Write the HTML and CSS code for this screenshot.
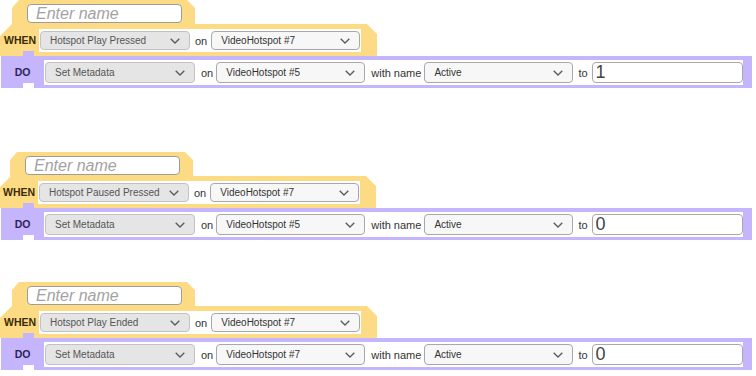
FILE: index.html
```html
<!DOCTYPE html>
<html>
<head>
<meta charset="utf-8">
<link rel="stylesheet" href="styles.css">
</head>
<body>
<div class="block b1">
  <div class="tab"><input class="name" placeholder="Enter name"></div>
  <div class="when">
    <span class="kw-when">WHEN</span>
    <div class="fields">
      <div class="sel sel-gray"><span>Hotspot Play Pressed</span><svg class="chev" width="10" height="6" viewBox="0 0 10 6"><polyline points="0.7,0.7 5,5 9.3,0.7"/></svg></div>
      <span class="lbl">on</span>
      <div class="sel"><span>VideoHotspot #7</span><svg class="chev" width="10" height="6" viewBox="0 0 10 6"><polyline points="0.7,0.7 5,5 9.3,0.7"/></svg></div>
    </div>
  </div>
  <div class="do">
    <span class="kw-do">DO</span>
    <div class="fields fields-do">
      <div class="sel sel-gray"><span>Set Metadata</span><svg class="chev" width="10" height="6" viewBox="0 0 10 6"><polyline points="0.7,0.7 5,5 9.3,0.7"/></svg></div>
      <span class="lbl">on</span>
      <div class="sel"><span>VideoHotspot #5</span><svg class="chev" width="10" height="6" viewBox="0 0 10 6"><polyline points="0.7,0.7 5,5 9.3,0.7"/></svg></div>
      <span class="lbl">with name</span>
      <div class="sel"><span>Active</span><svg class="chev" width="10" height="6" viewBox="0 0 10 6"><polyline points="0.7,0.7 5,5 9.3,0.7"/></svg></div>
      <span class="lbl lbl-to">to</span>
      <input class="val" value="1">
    </div>
  </div>
</div>

<div class="block b2">
  <div class="tab"><input class="name" placeholder="Enter name"></div>
  <div class="when">
    <span class="kw-when">WHEN</span>
    <div class="fields">
      <div class="sel sel-gray"><span>Hotspot Paused Pressed</span><svg class="chev" width="10" height="6" viewBox="0 0 10 6"><polyline points="0.7,0.7 5,5 9.3,0.7"/></svg></div>
      <span class="lbl">on</span>
      <div class="sel"><span>VideoHotspot #7</span><svg class="chev" width="10" height="6" viewBox="0 0 10 6"><polyline points="0.7,0.7 5,5 9.3,0.7"/></svg></div>
    </div>
  </div>
  <div class="do">
    <span class="kw-do">DO</span>
    <div class="fields fields-do">
      <div class="sel sel-gray"><span>Set Metadata</span><svg class="chev" width="10" height="6" viewBox="0 0 10 6"><polyline points="0.7,0.7 5,5 9.3,0.7"/></svg></div>
      <span class="lbl">on</span>
      <div class="sel"><span>VideoHotspot #5</span><svg class="chev" width="10" height="6" viewBox="0 0 10 6"><polyline points="0.7,0.7 5,5 9.3,0.7"/></svg></div>
      <span class="lbl">with name</span>
      <div class="sel"><span>Active</span><svg class="chev" width="10" height="6" viewBox="0 0 10 6"><polyline points="0.7,0.7 5,5 9.3,0.7"/></svg></div>
      <span class="lbl lbl-to">to</span>
      <input class="val" value="0">
    </div>
  </div>
</div>

<div class="block b3">
  <div class="tab"><input class="name" placeholder="Enter name"></div>
  <div class="when">
    <span class="kw-when">WHEN</span>
    <div class="fields">
      <div class="sel sel-gray"><span>Hotspot Play Ended</span><svg class="chev" width="10" height="6" viewBox="0 0 10 6"><polyline points="0.7,0.7 5,5 9.3,0.7"/></svg></div>
      <span class="lbl">on</span>
      <div class="sel"><span>VideoHotspot #7</span><svg class="chev" width="10" height="6" viewBox="0 0 10 6"><polyline points="0.7,0.7 5,5 9.3,0.7"/></svg></div>
    </div>
  </div>
  <div class="do">
    <span class="kw-do">DO</span>
    <div class="fields fields-do">
      <div class="sel sel-gray"><span>Set Metadata</span><svg class="chev" width="10" height="6" viewBox="0 0 10 6"><polyline points="0.7,0.7 5,5 9.3,0.7"/></svg></div>
      <span class="lbl">on</span>
      <div class="sel"><span>VideoHotspot #7</span><svg class="chev" width="10" height="6" viewBox="0 0 10 6"><polyline points="0.7,0.7 5,5 9.3,0.7"/></svg></div>
      <span class="lbl">with name</span>
      <div class="sel"><span>Active</span><svg class="chev" width="10" height="6" viewBox="0 0 10 6"><polyline points="0.7,0.7 5,5 9.3,0.7"/></svg></div>
      <span class="lbl lbl-to">to</span>
      <input class="val" value="0">
    </div>
  </div>
</div>
</body>
</html>
```

FILE: styles.css
```css
body {
  margin: 0;
  background: #ffffff;
  font-family: "Liberation Sans", Arial, sans-serif;
}

.block {
  position: relative;
  width: 752px;
}

.b2 { margin-top: 64px; }
.b2 .tab { margin-left: 10px; }
.b2 .when { margin-left: -1px; }
.b3 { margin-top: 42px; }

.tab {
  margin-left: 12px;
  width: 183px;
  height: 24px;
  box-sizing: border-box;
  padding: 4px 0 0 15px;
  background: #fddb84;
  clip-path: polygon(7px 0, calc(100% - 8px) 0, 100% 8px, 100% 100%, 0 100%, 0 8px);
}

.name {
  display: block;
  width: 155px;
  height: 19px;
  box-sizing: border-box;
  margin: 0;
  border: 1px solid #9c9c9c;
  border-radius: 4px;
  background: #ffffff;
  padding: 0 0 0 8px;
  font: italic 16px "Liberation Sans", Arial, sans-serif;
  color: #444;
  outline: none;
}

.name::placeholder {
  color: #a2a2a2;
}

.when {
  width: 377px;
  height: 32px;
  box-sizing: border-box;
  padding-top: 5px;
  display: flex;
  align-items: flex-start;
  background: #fddb84;
  clip-path: polygon(12px 0, calc(100% - 10px) 0, 100% 10px, 100% 100%, 0 100%, 0 12px);
}

.kw-when {
  width: 35px;
  padding-left: 4px;
  font-weight: bold;
  font-size: 10.5px;
  line-height: 23px;
  color: #3a2c08;
}

.fields {
  display: flex;
  align-items: center;
  background: #ffffff;
  padding: 2px 1px;
}

.sel {
  width: 150px;
  height: 19px;
  box-sizing: border-box;
  display: flex;
  align-items: center;
  justify-content: space-between;
  padding: 0 9px 0 9px;
  border: 1px solid #a8a8a8;
  border-radius: 4px;
  background: #f7f7f7;
  font-size: 10px;
  color: #333;
  white-space: nowrap;
}

.sel + .lbl + .sel {
  width: 149px;
}

.sel-gray {
  background: #e5e5e5;
  border-color: #c2c2c2;
  color: #555;
}

.chev {
  flex: none;
  fill: none;
  stroke: #5a5a5a;
  stroke-width: 1.3;
}

.lbl {
  margin: 0 4px 0 5px;
  font-size: 11px;
  color: #333;
  white-space: nowrap;
}

.do {
  margin-left: 1px;
  width: 751px;
  height: 32px;
  box-sizing: border-box;
  padding-top: 4px;
  display: flex;
  align-items: flex-start;
  background: #c4b5fd;
  position: relative;
}

.do::before {
  content: "";
  position: absolute;
  left: 22px;
  top: -5px;
  width: 11px;
  height: 5px;
  background: #c4b5fd;
}

.do::after {
  content: "";
  position: absolute;
  left: 22px;
  bottom: 0;
  width: 11px;
  height: 5px;
  background: #ffffff;
}

.kw-do {
  width: 43px;
  text-align: center;
  font-weight: bold;
  font-size: 10.5px;
  line-height: 25px;
  color: #2d1f55;
}

.fields-do {
  padding: 2px 0 2px 1px;
}

.fields-do .sel {
  height: 21px;
}

.fields-do .lbl {
  margin: 0 3px 0 6px;
}

.fields-do .lbl-to {
  margin: 0 4px 0 5px;
}

.val {
  display: block;
  width: 151px;
  height: 21px;
  box-sizing: border-box;
  margin: 0;
  border: 1px solid #a8a8a8;
  border-radius: 4px;
  background: #ffffff;
  padding: 0 0 0 3px;
  font: 18px "Liberation Sans", Arial, sans-serif;
  color: #444;
  outline: none;
}
```
